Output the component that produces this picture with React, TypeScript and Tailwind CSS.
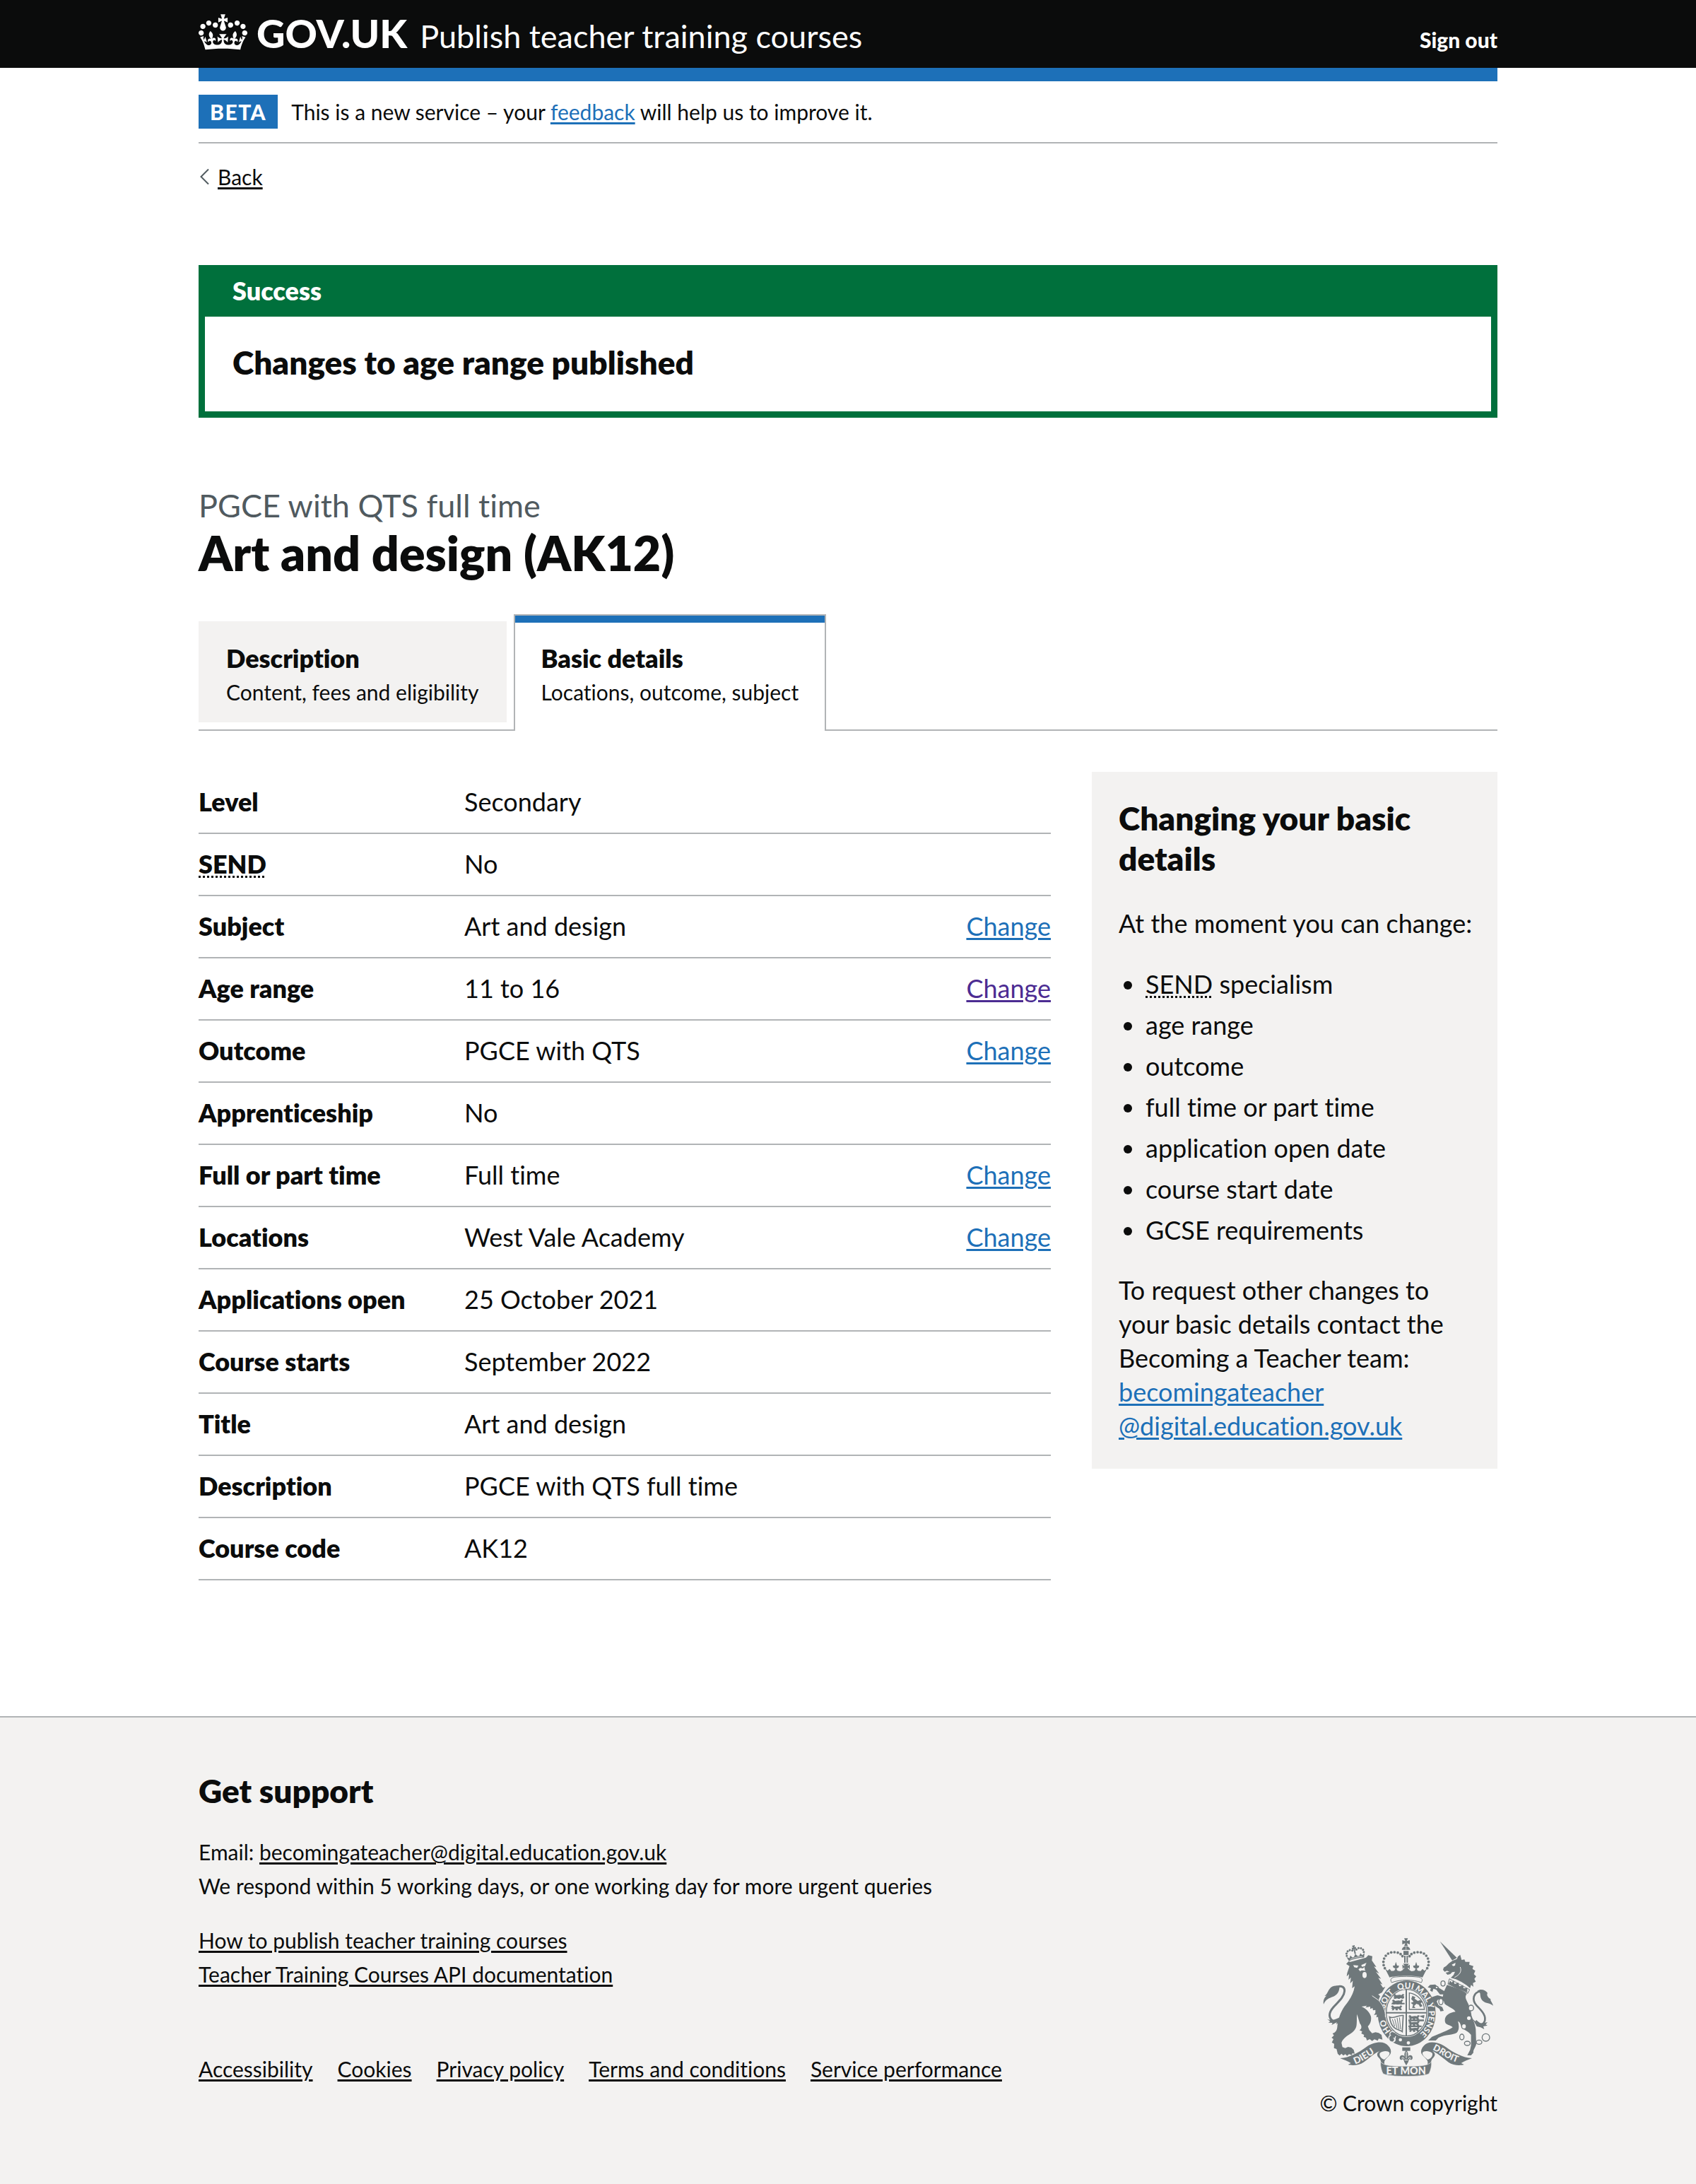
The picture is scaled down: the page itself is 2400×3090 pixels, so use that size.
import React from "react";

const link = "underline decoration-[3px] underline-offset-[3px]";
const abbr = "underline decoration-dotted decoration-[3px] underline-offset-[3px] cursor-help";

type Row = {
  label: React.ReactNode;
  name: string;
  value: string;
  change?: "link" | "visited";
};

const rows: Row[] = [
  { name: "level", label: "Level", value: "Secondary" },
  {
    name: "SEND",
    label: (
      <abbr title="Special educational needs and disability" className={abbr}>
        SEND
      </abbr>
    ),
    value: "No",
  },
  { name: "subject", label: "Subject", value: "Art and design", change: "link" },
  { name: "age range", label: "Age range", value: "11 to 16", change: "visited" },
  { name: "outcome", label: "Outcome", value: "PGCE with QTS", change: "link" },
  { name: "apprenticeship", label: "Apprenticeship", value: "No" },
  { name: "full or part time", label: "Full or part time", value: "Full time", change: "link" },
  { name: "locations", label: "Locations", value: "West Vale Academy", change: "link" },
  { name: "applications open", label: "Applications open", value: "25 October 2021" },
  { name: "course starts", label: "Course starts", value: "September 2022" },
  { name: "title", label: "Title", value: "Art and design" },
  { name: "description", label: "Description", value: "PGCE with QTS full time" },
  { name: "course code", label: "Course code", value: "AK12" },
];

const footerLinks = ["Accessibility", "Cookies", "Privacy policy", "Terms and conditions", "Service performance"];

function Container({ className = "", children }: { className?: string; children: React.ReactNode }) {
  return <div className={"mx-auto w-full max-w-[1838px] " + className}>{children}</div>;
}

function CrownLogo() {
  return (
    <svg viewBox="0 0 132 97" className="mt-[2px] h-[51px] w-[69px] shrink-0 self-start" fill="currentColor" aria-hidden="true">
      <path
        fillRule="evenodd"
        d="M25 30.2c3.5 1.5 7.7-.2 9.1-3.7 1.5-3.6-.2-7.8-3.9-9.2-3.6-1.4-7.6.3-9.1 3.9-1.4 3.5.3 7.5 3.9 9zM9 39.5c3.6 1.5 7.8-.2 9.2-3.7 1.5-3.6-.2-7.8-3.9-9.1-3.6-1.5-7.6.2-9.1 3.8-1.4 3.5.3 7.5 3.8 9zM4.4 57.2c3.5 1.5 7.7-.2 9.1-3.8 1.5-3.6-.2-7.7-3.9-9.1-3.5-1.5-7.6.3-9.1 3.8-1.4 3.5.3 7.6 3.9 9.1zm38.3-21.4c3.5 1.5 7.7-.2 9.1-3.8 1.5-3.6-.2-7.7-3.9-9.1-3.6-1.5-7.6.3-9.1 3.8-1.3 3.6.4 7.7 3.9 9.1zm64.4-5.6c-3.6 1.5-7.8-.2-9.1-3.7-1.5-3.6.2-7.8 3.8-9.2 3.6-1.4 7.7.3 9.2 3.9 1.3 3.5-.4 7.5-3.9 9zm15.9 9.3c-3.6 1.5-7.7-.2-9.1-3.7-1.5-3.6.2-7.8 3.7-9.1 3.6-1.5 7.7.2 9.2 3.8 1.5 3.5-.3 7.5-3.8 9zm4.7 17.7c-3.6 1.5-7.8-.2-9.2-3.8-1.5-3.6.2-7.7 3.9-9.1 3.6-1.5 7.7.3 9.2 3.8 1.3 3.5-.4 7.6-3.9 9.1zM89.3 35.8c-3.6 1.5-7.8-.2-9.2-3.8-1.4-3.6.2-7.7 3.9-9.1 3.6-1.5 7.7.3 9.2 3.8 1.4 3.6-.3 7.7-3.9 9.1zM69.7 17.7l8.9 4.7V9.3l-8.9 2.8c-.2-.3-.5-.6-.9-.9L72.4 0H59.6l3.5 11.2c-.3.3-.6.5-.9.9l-8.8-2.8v13.1l8.8-4.7c.3.3.6.7.9.9l-5 15.4v.1c-.2.8-.4 1.6-.4 2.4 0 4.1 3.1 7.5 7 8.1h.2c.3 0 .7.1 1 .1.4 0 .7 0 1-.1h.2c4-.6 7.1-4.1 7.1-8.1 0-.8-.1-1.7-.4-2.4V34l-5.1-15.4c.4-.2.7-.6 1-.9zM66 92.8c16.9 0 32.8 1.1 47.1 3.2 4-16.9 8.9-26.7 14-33.5l-9.6-3.4c1 4.9 1.1 7.2 0 10.2-1.5-1.4-3-4.3-4.2-8.7L108.6 76c2.8-2 5-3.2 7.5-3.3-4.4 9.4-10 11.9-13.6 11.2-4.3-.8-6.3-4.6-5.6-7.9 1-4.7 5.7-5.9 8-.5 4.3-8.7-3-11.4-7.6-8.8 7.1-7.2 7.9-13.5 2.1-21.1-8 6.1-8.1 12.3-4.5 20.8-4.7-5.4-12.1-2.5-9.5 6.2 3.4-5.2 7.9-2 7.2 3.1-.6 4.3-6.4 7.8-13.5 7.2-10.3-.9-10.9-8-11.2-13.8 2.5-.5 7.1 1.8 11 7.3L80.2 60c-4.1 4.4-8 5.3-12.3 5.4 1.4-4.4 8-11.6 8-11.6H55.5s6.4 7.2 7.9 11.6c-4.2-.1-8-1-12.3-5.4l1.4 16.4c3.9-5.5 8.5-7.7 10.9-7.3-.3 5.8-.9 12.8-11.1 13.8-7.2.6-12.9-2.9-13.5-7.2-.7-5 3.8-8.3 7.1-3.1 2.7-8.7-4.6-11.6-9.4-6.2 3.7-8.5 3.6-14.7-4.6-20.8-5.8 7.6-5 13.9 2.2 21.1-4.7-2.6-11.9.1-7.7 8.8 2.3-5.5 7.1-4.2 8.1.5.7 3.3-1.3 7.1-5.7 7.9-3.5.7-9-1.8-13.5-11.2 2.5.1 4.7 1.3 7.5 3.3l-4.7-15.4c-1.2 4.4-2.7 7.2-4.3 8.7-1.1-3-.9-5.3 0-10.2l-9.5 3.4c5 6.9 9.9 16.7 14 33.5 14.8-2.1 30.8-3.2 47.7-3.2z"
      />
    </svg>
  );
}

const INK = "#6f787b";
const PAPER = "#f3f2f1";

const crownBeads: [number, number][] = [
  [302, 161], [297, 148], [296, 134], [299, 120], [306, 108], [316, 99],
  [329, 94], [343, 93], [357, 95], [369, 101], [377, 110],
];

const smallCrownBeads: [number, number][] = [
  [-37, -20], [-36, -30], [-29, -38], [-19, -41], [-9, -37],
  [37, -20], [36, -30], [29, -38], [19, -41], [9, -37],
];

function PassantLion({ x, y }: { x: number; y: number }) {
  return (
    <path
      transform={`translate(${x} ${y})`}
      d="M0 5 L5 -1 L11 1 L13 5 L28 3 L36 4 L41 -1 L48 2 L44 7 L42 11 L47 18 L38 20 L33 14 L28 14 L30 20 L20 20 L19 14 L14 14 L12 20 L3 20 L7 14 L0 12 L6 8 Z"
    />
  );
}

function ScrollEnd() {
  return (
    <>
      <path
        fill={INK}
        d="M112 543 C152 541 190 520 224 495 C252 475 298 466 316 490 C326 500 330 512 327 522 C320 536 306 544 301 554 C299 560 300 568 302 574 L286 568 C286 556 284 548 276 541 C266 530 268 520 280 513 C262 518 240 540 212 560 C192 574 162 575 146 570 L158 564 C144 556 130 550 112 543 Z"
      />
      <path fill={PAPER} d="M281 521 C294 511 316 511 322 520 C324 532 310 541 300 549 C288 545 276 534 281 521 Z" />
    </>
  );
}

function RoyalArms() {
  return (
    <svg viewBox="39 30 726 594" className="h-[198px] w-[242px]" role="img" aria-label="Royal coat of arms">
      <defs>
        <path id="garter-path" d="M395 459 A94 106 0 0 1 395 247 A94 106 0 0 1 395 459" />
        <path id="dieu-path" d="M176 568 C205 560 235 535 282 508" />
        <path id="droit-path" d="M500 505 C540 520 570 555 632 566" />
      </defs>

      {/* Lion's tail */}
      <path d="M84 246 C110 232 132 236 131 258 C129 284 104 304 84 326 C62 350 62 374 84 386 C98 388 110 378 120 368" fill="none" stroke={INK} strokeWidth="9" />
      <g fill={INK}>
        <path d="M42 314 C39 297 46 285 56 277 C52 279 50 279 46 279 C58 270 60 258 68 248 C78 236 96 232 110 240 C108 262 100 274 84 281 C66 287 50 294 42 314 Z" />
        <path d="M56 376 C68 384 88 384 116 366 L112 386 L96 400 L98 391 L76 402 L80 393 L62 392 L70 387 Z" />
      </g>

      {/* Garter, motto and shield */}
      <ellipse cx="395" cy="353" rx="128" ry="143" fill={PAPER} />
      <ellipse cx="395" cy="353" rx="123" ry="139" fill={INK} />
      <ellipse cx="394" cy="350" rx="91" ry="103" fill={PAPER} />
      <ellipse cx="394" cy="350" rx="86" ry="99" fill="none" stroke={INK} strokeWidth="4" />
      <g fill={PAPER} fontFamily="Lato, sans-serif" fontWeight="900" fontSize="35" textAnchor="middle">
        <text><textPath href="#garter-path" startOffset="104">HO</textPath></text>
        <text><textPath href="#garter-path" startOffset="216">SOIT</textPath></text>
        <text><textPath href="#garter-path" startOffset="309">QUI</textPath></text>
        <text><textPath href="#garter-path" startOffset="386">MAL</textPath></text>
        <text><textPath href="#garter-path" startOffset="440">Y</textPath></text>
        <text><textPath href="#garter-path" startOffset="514">PENSE</textPath></text>
      </g>
      <path d="M393 252 V448 M309 350 H479" stroke={INK} strokeWidth="6" />
      <g fill={INK}>
        <PassantLion x={337} y={271} />
        <PassantLion x={332} y={295} />
        <PassantLion x={328} y={320} />
        <PassantLion x={402} y={361} />
        <PassantLion x={402} y={386} />
        <PassantLion x={402} y={411} />
        <path d="M342 284 L384 280 L384 287 L340 290 Z M332 308 H386 V314 H330 Z M402 379 H468 V386 H402 Z M402 404 H458 V411 H402 Z M448 364 L470 360 L468 374 Z" />
        <path d="M419 278 L432 284 L428 290 L442 300 L452 296 L462 304 L454 310 L462 322 L452 326 L446 316 L436 312 L426 322 L432 330 L418 330 L422 316 L412 308 L424 304 L414 292 Z" />
      </g>
      <path d="M406 266 V336 H470 C468 300 442 272 406 266 Z" fill="none" stroke={INK} strokeWidth="4" />
      <g fill="none" stroke={INK}>
        <path d="M322 368 C344 378 358 358 380 362 L376 430 C366 420 330 428 322 368 Z" strokeWidth="5" />
        <path d="M334 378 L344 408 M344 376 L354 416 M354 372 L362 420 M364 370 L369 420" strokeWidth="3" />
      </g>
      <path d="M344 434 C328 424 318 438 326 446 C314 452 318 476 336 474 C350 472 348 456 338 458" fill={INK} stroke={PAPER} strokeWidth="4" />
      <path d="M348 450 L340 474" stroke={PAPER} strokeWidth="4" />
      <circle cx="368" cy="465" r="7" fill={PAPER} />
      <circle cx="402" cy="478" r="7" fill={PAPER} />

      {/* Lion */}
      <path
        fill={INK}
        d="M138 143 L152 152 L142 182 L140 196 L150 186 L148 210 L158 200 L155 226 L166 214 L163 246 L174 238 C170 262 162 280 148 300 C140 312 130 322 124 334 C108 362 102 388 100 412 C98 428 90 436 80 438 L86 446 L76 456 L84 462 L77 476 L87 482 L86 500 L97 504 L102 524 L110 532 L118 524 L126 532 L134 526 L142 533 L150 526 L162 530 L164 522 L174 524 L170 508 L160 498 L146 495 L134 500 L122 496 L118 478 C122 464 136 452 152 442 C168 432 180 420 182 402 C184 384 182 374 184 356 L196 396 C204 404 206 418 194 424 L206 430 L202 438 L214 444 L212 452 L222 456 L226 468 L238 462 L248 470 L258 463 L272 469 L276 460 L292 464 L288 444 L276 436 L262 433 L248 437 L236 424 L230 408 C240 398 246 384 243 366 C238 348 220 330 203 324 L226 320 L220 328 L240 324 L240 334 L250 330 L252 340 L262 338 L262 350 L256 360 L268 358 L266 370 L280 366 L290 376 L302 366 C304 348 300 328 290 314 L276 294 L282 280 L274 272 L290 264 L304 240 L294 244 L282 226 L292 230 L274 202 L286 206 L264 176 L278 184 L256 154 L266 156 L247 128 L249 110 L232 106 L222 116 L156 134 L148 132 Z"
      />
      <path d="M248 278 L274 296 C294 316 306 342 304 368" stroke={PAPER} strokeWidth="3" fill="none" />
      <g fill={PAPER}>
        <path d="M168 148 L190 150 L184 160 L172 157 Z" />
        <path d="M202 148 L224 138 L218 152 L205 155 Z" />
        <path d="M190 166 L198 160 L208 162 L216 156 L217 167 L220 172 L204 170 L197 174 Z" />
        <ellipse cx="216" cy="190" rx="9" ry="13" />
      </g>

      {/* Lion's crown */}
      <g transform="translate(181 120) rotate(-13)" fill={INK}>
        <path d="M-33 3 C-12 -1 12 -1 33 3 L39 -15 L28 -8 L22 -18 L15 -8 L8 -9 L0 -20 L-8 -9 L-15 -8 L-22 -18 L-28 -8 L-39 -15 Z" />
        {smallCrownBeads.map(([x, y]) => (
          <circle key={`${x},${y}`} cx={x} cy={y} r="4.6" />
        ))}
        <path d="M-3 -20 L-3 -42 L-9 -38 L-9 -50 L-3 -47 L-6 -57 L6 -57 L3 -47 L9 -50 L9 -38 L3 -42 L3 -20 Z" />
        <path d="M-26 -2 C-10 -6 10 -6 26 -2" stroke={PAPER} strokeWidth="2" fill="none" />
      </g>

      {/* Central crown */}
      <path d="M331 222 C322 208 330 199 350 198 C376 195 412 195 438 198 C458 199 466 208 457 222 C420 208 366 208 331 222 Z" fill={PAPER} stroke={INK} strokeWidth="3" />
      <path
        fill={INK}
        d="M303 163 L314 172 L322 164 L330 173 L342 172 L347 163 L338 158 L336 150 L344 150 L349 134 L354 150 L362 150 L360 158 L351 163 L356 172 L368 174 L376 170 L386 160 L380 160 L378 168 L376 146 L386 152 L380 142 H404 L398 152 L408 146 L408 168 L404 160 L398 160 L408 170 L416 174 L428 172 L433 163 L424 158 L422 150 L430 150 L435 134 L440 150 L448 150 L446 158 L437 163 L442 172 L454 173 L462 164 L470 172 L481 163 L462 200 C440 191 344 191 322 200 Z"
      />
      <g fill={INK}>
        {crownBeads.map(([x, y]) => (
          <React.Fragment key={`${x},${y}`}>
            <circle cx={x} cy={y} r="5.6" />
            <circle cx={784 - x} cy={y} r="5.6" />
          </React.Fragment>
        ))}
        <path d="M384 108 H390 V138 H384 Z M394 108 H400 V138 H394 Z M381 88 H403 V105 H381 Z" />
        <path d="M374 83 C376 72 384 68 392 68 C400 68 408 72 410 83 Z" />
        <path d="M384 34 H400 L395 46 L408 42 V60 L395 55 L400 67 H384 L389 55 L376 60 V42 L389 46 Z" />
      </g>
      <path d="M392 69 V83" stroke={PAPER} strokeWidth="2" />

      {/* Unicorn's tail */}
      <path d="M712 258 C676 262 670 296 692 320 C716 344 736 366 724 390 C716 404 704 400 688 384" fill="none" stroke={INK} strokeWidth="8" />
      <g fill={INK}>
        <path d="M694 258 C710 246 728 254 738 266 C732 276 742 288 752 292 C746 294 758 306 762 320 C748 308 732 312 718 300 C706 288 708 274 706 266 Z" />
        <path d="M674 376 L692 392 L712 396 L738 390 L730 400 L738 404 L720 408 L724 420 L708 412 L692 408 Z" />
      </g>

      {/* Unicorn */}
      <g fill={INK}>
        <path d="M536 47 L608 117 L588 128 Z" />
        <path d="M608 122 L590 129 L574 140 L562 152 L552 158 L549 168 L556 176 L566 172 L576 176 L560 180 L568 189 L580 186 L588 178 L600 176 L594 190 L582 202 L604 208 L628 220 L650 234 L664 246 L668 232 L678 240 L676 224 L688 218 L682 206 L690 196 L680 186 L686 172 L674 164 L678 152 L660 146 L662 134 L644 134 L640 124 L628 126 L622 104 L612 112 Z" />
        <path d="M566 232 C582 238 630 252 650 270 C640 284 646 292 656 312 C664 330 668 344 670 362 C676 380 686 398 688 420 L690 484 C686 500 676 508 678 520 L668 531 L652 531 L664 508 L668 488 L668 444 C658 430 642 424 632 416 C622 404 624 390 612 386 C618 404 618 424 608 434 C592 446 560 440 530 456 L518 468 L486 468 L502 452 L522 444 C540 436 566 428 590 412 C580 400 562 404 558 390 C552 366 572 350 602 346 C596 332 572 326 556 312 L552 300 L528 294 L522 302 L530 318 L546 326 L552 342 L538 344 L534 334 L516 322 L506 300 L500 284 L526 276 L548 282 L550 272 L536 272 L520 252 L508 248 L504 262 L494 256 L498 246 L484 242 L494 232 L516 230 L534 246 L554 258 Z" />
      </g>
      <path d="M586 146 L602 138 L600 150 L592 152 Z" fill={PAPER} />
      <path d="M622 156 C630 176 618 190 598 200" stroke={PAPER} strokeWidth="3" fill="none" />
      <path d="M576 206 L662 252 L654 268 L570 228 Z" fill={PAPER} stroke={INK} strokeWidth="3" />
      <path
        fill={INK}
        d="M572 228 L580 214 L586 222 L594 212 L598 228 L606 226 L614 222 L618 238 L626 236 L634 232 L636 246 L644 246 L652 244 L652 264 L612 248 Z"
      />

      {/* Chain */}
      <g fill={PAPER} stroke={INK} strokeWidth="4">
        <ellipse cx="549" cy="226" rx="9" ry="11" />
        <ellipse cx="522" cy="243" rx="6" ry="5" />
        <ellipse cx="540" cy="303" rx="9" ry="13" />
        <ellipse cx="668" cy="330" rx="11" ry="12" />
        <ellipse cx="659" cy="373" rx="10" ry="10" />
        <ellipse cx="638" cy="408" rx="10" ry="11" />
      </g>
      <g fill="none" stroke={INK} strokeWidth="4">
        <ellipse cx="629" cy="453" rx="9" ry="12" />
        <ellipse cx="652" cy="480" rx="12" ry="9" />
        <ellipse cx="702" cy="475" rx="12" ry="9" />
        <circle cx="731" cy="455" r="16" />
      </g>

      {/* Scroll */}
      <ScrollEnd />
      <g transform="translate(784 0) scale(-1 1)">
        <ScrollEnd />
      </g>
      <path d="M284 558 C300 578 340 576 392 577 C444 576 484 578 500 558 C502 576 496 596 490 608 C470 624 314 624 294 608 C288 596 282 576 284 558 Z" fill={INK} stroke={PAPER} strokeWidth="2" />
      <g fill={PAPER} fontFamily="Lato, sans-serif" fontWeight="900">
        <text x="392" y="611" textAnchor="middle" fontSize="43">ET MON</text>
        <text fontSize="40"><textPath href="#dieu-path" startOffset="0">DIEU</textPath></text>
        <text fontSize="38"><textPath href="#droit-path" startOffset="4">DROIT</textPath></text>
      </g>

      {/* Pendant */}
      <g fill={INK}>
        <path d="M376 497 H410 V512 H376 Z" />
        <path d="M393 508 C400 518 404 528 398 540 C402 528 420 526 420 542 C418 552 410 552 408 546 C404 550 402 554 402 558 L393 574 L384 558 C384 554 382 550 378 546 C376 552 366 552 365 542 C366 526 384 528 388 540 C382 528 386 518 393 508 Z" />
      </g>
      <path d="M393 516 V544 M376 546 C372 540 380 534 384 546 M410 546 C414 540 406 534 402 546 M386 551 H400" stroke={PAPER} strokeWidth="3" fill="none" />
    </svg>
  );
}

function SummaryRow({ row }: { row: Row }) {
  return (
    <div className="grid grid-cols-[376px_1fr_auto] border-b-2 border-[#b1b4b6] pt-[18px] pb-5">
      <dt className="font-extrabold">{row.label}</dt>
      <dd>{row.value}</dd>
      {row.change && (
        <dd>
          <a
            href="#"
            aria-label={"Change " + row.name}
            className={link + (row.change === "visited" ? " text-[#4c2c92]" : " text-[#1d70b8]")}
          >
            Change
          </a>
        </dd>
      )}
    </div>
  );
}

export default function App() {
  return (
    <div className="min-h-screen bg-white font-['Lato',sans-serif] text-[36px] leading-[48px] text-[#0b0c0c] [font-variant-ligatures:no-common-ligatures]">
      <header className="bg-[#0b0c0c] text-white">
        <Container className="flex h-24 items-baseline pt-[18px] leading-[58px]">
          <a href="#" className="flex items-baseline gap-[13px] text-[56px] font-black">
            <CrownLogo />
            GOV.UK
          </a>
          <a href="#" className="ml-[18px] text-[45px]">
            Publish teacher training courses
          </a>
          <a href="#" className="ml-auto text-[30px] font-black">
            Sign out
          </a>
        </Container>
      </header>

      <Container>
        <div className="h-[19px] bg-[#1d70b8]" />
        <div className="flex items-center gap-[19px] border-b-2 border-[#b1b4b6] py-[19px] text-[30px]">
          <strong className="bg-[#1d70b8] px-4 font-black tracking-wider text-white">BETA</strong>
          <span>
            This is a new service – your{" "}
            <a href="#" className={link + " text-[#1d70b8]"}>
              feedback
            </a>{" "}
            will help us to improve it.
          </span>
        </div>
        <a href="#" className="mt-[23px] inline-flex items-center gap-3 text-[30px]">
          <svg viewBox="0 0 15 24" className="h-6 w-[15px]" fill="none" stroke="#505a5f" strokeWidth="2" aria-hidden="true">
            <path d="M14 1.500L3.500 12L14 22.500" />
          </svg>
          <span className={link}>Back</span>
        </a>

        <main>
          <section aria-labelledby="banner-title" className="mt-[101px] border-[9px] border-[#00703c]">
            <h2 id="banner-title" className="bg-[#00703c] px-[39px] pt-[3px] pb-[13px] font-extrabold text-white">
              Success
            </h2>
            <p className="px-[39px] pt-9 pb-[41px] text-[46px] leading-[57px] font-extrabold">
              Changes to age range published
            </p>
          </section>

          <p className="mt-24 text-[45px] leading-[57px] text-[#505a5f]">PGCE with QTS full time</p>
          <h1 className="text-[68px] leading-[76px] font-extrabold">Art and design (AK12)</h1>

          <nav aria-label="Course" className="mt-[49px] flex items-end gap-[10px] border-b-2 border-[#b1b4b6]">
            <a href="#" className="mb-[10px] bg-[#f3f2f1] px-[39px] pt-7 pb-[19px]">
              <span className="block font-extrabold">Description</span>
              <span className="block text-[30px]">Content, fees and eligibility</span>
            </a>
            <a href="#" aria-current="page" className="-mb-[2px] border-2 border-b-0 border-[#b1b4b6] bg-white">
              <span className="block h-[10px] bg-[#1d70b8]" />
              <span className="block px-[37px] pt-[26px] pb-[31px]">
                <span className="block font-extrabold">Basic details</span>
                <span className="block text-[30px]">Locations, outcome, subject</span>
              </span>
            </a>
          </nav>

          <div className="mt-[58px] grid grid-cols-[1206fr_574fr] items-start gap-[58px]">
            <dl>
              {rows.map((row) => (
                <SummaryRow key={row.name} row={row} />
              ))}
            </dl>

            <aside className="bg-[#f3f2f1] py-[37px] pr-[30px] pl-[38px]">
              <h2 className="text-[46px] leading-[57px] font-extrabold">Changing your basic details</h2>
              <p className="mt-[39px]">At the moment you can change:</p>
              <ul className="mt-[38px] list-disc space-y-[10px] pl-[38px]">
                <li>
                  <abbr title="Special educational needs and disability" className={abbr}>
                    SEND
                  </abbr>{" "}
                  specialism
                </li>
                <li>age range</li>
                <li>outcome</li>
                <li>full time or part time</li>
                <li>application open date</li>
                <li>course start date</li>
                <li>GCSE requirements</li>
              </ul>
              <p className="mt-[37px]">
                To request other changes to your basic details contact the Becoming a Teacher team:{" "}
                <a href="#" className={link + " text-[#1d70b8]"}>
                  becomingateacher
                  <wbr />
                  @digital.education.gov.uk
                </a>
              </p>
            </aside>
          </div>
        </main>
      </Container>

      <footer className="mt-48 border-t-2 border-[#b1b4b6] bg-[#f3f2f1] pt-[75px] pb-[92px] text-[30px]">
        <Container className="flex items-end justify-between">
          <div className="pb-12">
            <h2 className="text-[46px] leading-[57px] font-extrabold">Get support</h2>
            <p className="mt-[34px]">
              Email:{" "}
              <a href="#" className={link}>
                becomingateacher@digital.education.gov.uk
              </a>
            </p>
            <p>We respond within 5 working days, or one working day for more urgent queries</p>
            <ul className="mt-[29px]">
              <li>
                <a href="#" className={link}>
                  How to publish teacher training courses
                </a>
              </li>
              <li>
                <a href="#" className={link}>
                  Teacher Training Courses API documentation
                </a>
              </li>
            </ul>
            <ul className="mt-[86px] flex flex-wrap gap-x-[35px]">
              {footerLinks.map((text) => (
                <li key={text}>
                  <a href="#" className={link}>
                    {text}
                  </a>
                </li>
              ))}
            </ul>
          </div>
          <a href="#" className="flex flex-col items-center gap-3">
            <RoyalArms />
            <span>© Crown copyright</span>
          </a>
        </Container>
      </footer>
    </div>
  );
}
